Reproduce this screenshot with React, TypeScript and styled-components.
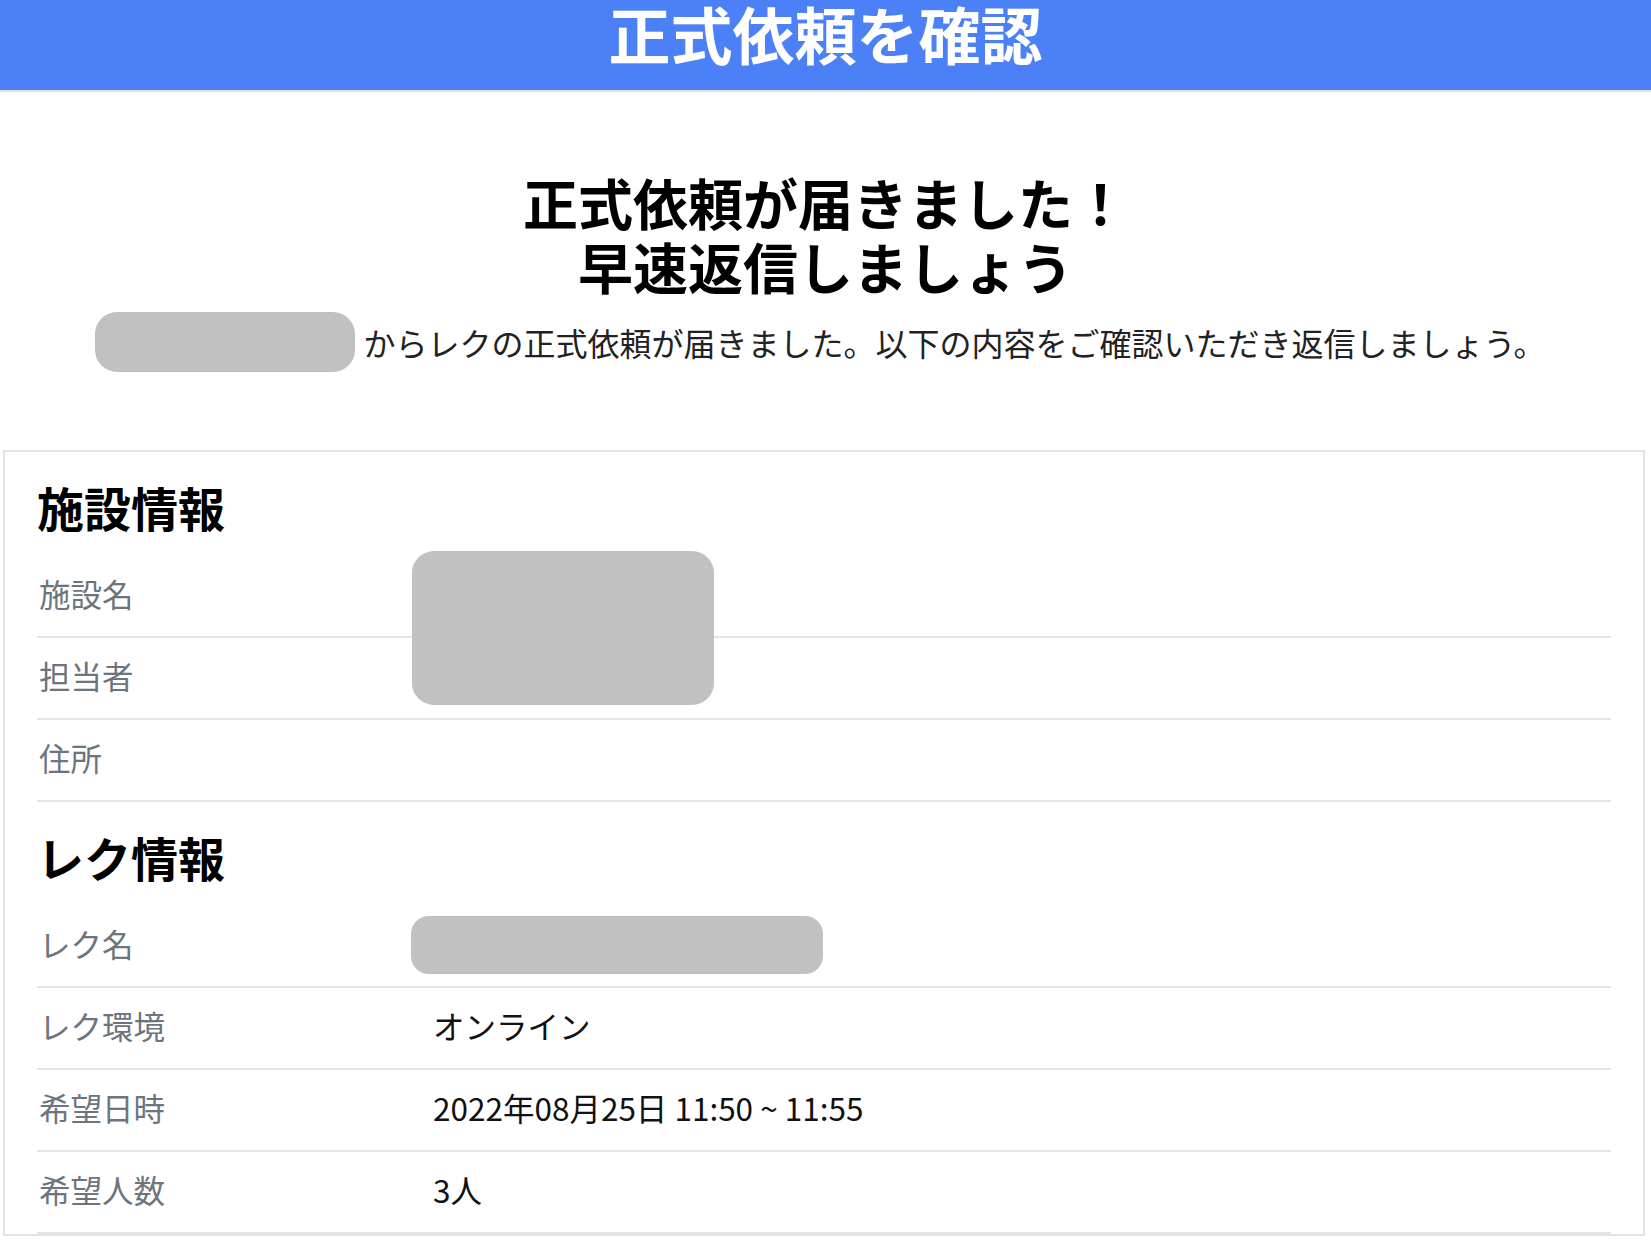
import React from "react";
import styled, { createGlobalStyle } from "styled-components";

const GlobalStyle = createGlobalStyle`
  body {
    margin: 0;
    background: #ffffff;
    font-family: "Noto Sans CJK JP", "Noto Sans", sans-serif;
    color: #212529;
  }
`;

const Header = styled.header`
  box-sizing: border-box;
  height: 92px;
  padding-top: 1px;
  background-color: #4b80f6;
  border-bottom: 2px solid #dde1e8;
  text-align: center;
`;

const HeaderTitle = styled.h1`
  margin: 0;
  font-size: 62px;
  line-height: 64px;
  font-weight: 700;
  color: #ffffff;
`;

const Hero = styled.section`
  margin-top: 77px;
  text-align: center;
`;

const HeroTitle = styled.h2`
  margin: 0;
  font-size: 55px;
  line-height: 64px;
  font-weight: 700;
  color: #000000;
`;

const Lead = styled.div`
  display: flex;
  justify-content: center;
  align-items: center;
  gap: 8px;
  height: 60px;
  margin: 15px 10px 0 0;
  font-size: 32px;
  color: #222222;
`;

const Redacted = styled.span<{ $w: number; $h: number; $r?: number }>`
  display: inline-block;
  flex-shrink: 0;
  width: ${(p) => p.$w}px;
  height: ${(p) => p.$h}px;
  border-radius: ${(p) => p.$r ?? 20}px;
  background-color: #c1c1c1;
`;

const Card = styled.div`
  margin: 78px 6px 0 3px;
  padding: 0 32px;
  border: 2px solid #e2e4e8;
`;

const SectionTitle = styled.h3`
  margin: 0;
  padding: 27px 0 21px;
  font-size: 47px;
  line-height: 56px;
  font-weight: 700;
  color: #000000;
`;

const Rows = styled.div`
  position: relative;
`;

const Row = styled.div`
  display: grid;
  grid-template-columns: 396px 1fr;
  align-items: center;
  box-sizing: border-box;
  height: 82px;
  padding-bottom: 6px;
  border-bottom: 2px solid #e3e5e9;
  font-size: 31.5px;
`;

const Label = styled.div`
  padding-left: 2px;
  color: #6c757d;
`;

const Value = styled.div`
  color: #111111;
`;

const ValuePill = styled(Redacted)`
  display: block;
  margin: 4px 0 0 -22px;
`;

const Cover = styled(Redacted)`
  position: absolute;
  left: 375px;
  top: -5px;
`;

const facility = ["施設名", "担当者", "住所"];

const recreation: { label: string; value?: string }[] = [
  { label: "レク名" },
  { label: "レク環境", value: "オンライン" },
  { label: "希望日時", value: "2022年08月25日 11:50 ~ 11:55" },
  { label: "希望人数", value: "3人" },
];

export default function App() {
  return (
    <>
      <GlobalStyle />
      <Header>
        <HeaderTitle>正式依頼を確認</HeaderTitle>
      </Header>
      <Hero>
        <HeroTitle>
          正式依頼が届きました！
          <br />
          早速返信しましょう
        </HeroTitle>
        <Lead>
          <Redacted $w={260} $h={60} $r={22} />
          <span>からレクの正式依頼が届きました。以下の内容をご確認いただき返信しましょう。</span>
        </Lead>
      </Hero>
      <Card>
        <SectionTitle>施設情報</SectionTitle>
        <Rows>
          {facility.map((label) => (
            <Row key={label}>
              <Label>{label}</Label>
              <Value />
            </Row>
          ))}
          <Cover $w={302} $h={154} $r={22} />
        </Rows>
        <SectionTitle>レク情報</SectionTitle>
        <Rows>
          {recreation.map((item) => (
            <Row key={item.label}>
              <Label>{item.label}</Label>
              <Value>
                {item.value ?? <ValuePill $w={412} $h={58} $r={18} />}
              </Value>
            </Row>
          ))}
        </Rows>
      </Card>
    </>
  );
}
